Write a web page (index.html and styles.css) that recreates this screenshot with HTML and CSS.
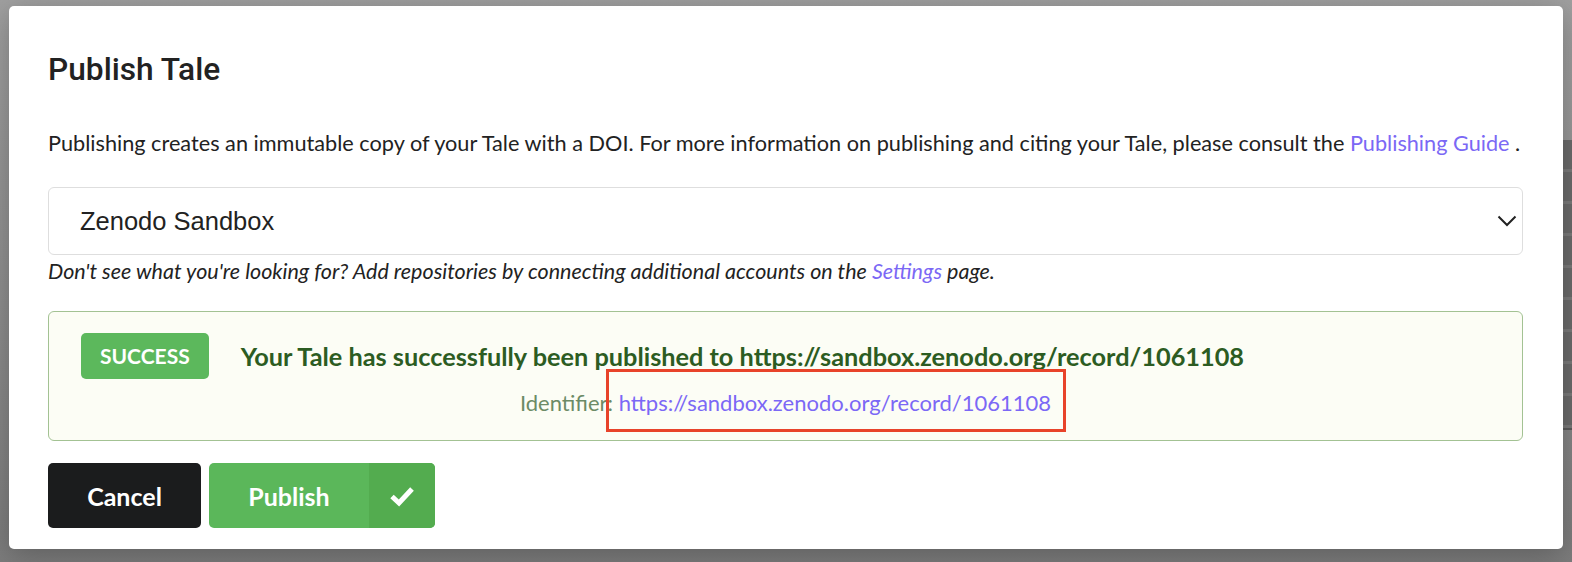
FILE: index.html
```html
<!DOCTYPE html>
<html>
<head>
<meta charset="utf-8">
<link rel="stylesheet" href="styles.css">
</head>
<body>
<div class="backdrop-table">
  <div class="row"></div><div class="row"></div><div class="row"></div><div class="row"></div><div class="row"></div><div class="row"></div><div class="row"></div><div class="row"></div><div class="row"></div>
</div>
<div class="modal">
  <h1 class="title">Publish Tale</h1>
  <p class="intro">Publishing creates an immutable copy of your Tale with a DOI. For more information on publishing and citing your Tale, please consult the <a class="link" href="#">Publishing Guide</a> .</p>
  <div class="select">
    <span class="select-text">Zenodo Sandbox</span>
    <svg class="chevron" width="20" height="12" viewBox="0 0 20 12"><path d="M1.5 1.5 L10 10 L18.5 1.5" fill="none" stroke="#222" stroke-width="2"/></svg>
  </div>
  <p class="hint">Don't see what you're looking for? Add repositories by connecting additional accounts on the <a class="link" href="#">Settings</a> page.</p>
  <div class="message">
    <div class="msg-row">
      <span class="label">SUCCESS</span>
      <span class="msg-header">Your Tale has successfully been published to https://sandbox.zenodo.org/record/1061108</span>
    </div>
    <div class="ident">Identifier: <a class="link" href="#">https://sandbox.zenodo.org/record/1061108</a></div>
    <div class="highlight"></div>
  </div>
  <div class="actions">
    <button class="btn cancel">Cancel</button>
    <button class="btn publish"><span class="pub-text">Publish</span><span class="pub-icon"><svg width="26" height="22" viewBox="0 0 26 22"><path d="M3 11.5 L10 18 L23 4" fill="none" stroke="#fff" stroke-width="5" stroke-linejoin="miter"/></svg></span></button>
  </div>
</div>
</body>
</html>
```

FILE: styles.css
```css
html, body {
  margin: 0;
  padding: 0;
}
body {
  width: 1572px;
  height: 562px;
  overflow: hidden;
  background: linear-gradient(180deg, #a0a0a0 0%, #8c8c8c 60%, #7c7c7c 100%);
  font-family: Lato, "Liberation Sans", sans-serif;
  position: relative;
}
.backdrop-table {
  position: absolute;
  left: 1540px;
  top: 140px;
  width: 40px;
  height: 288px;
  background: #6b6b6b;
  display: flex;
  flex-direction: column;
  border-bottom: 2px solid #5a5a5a;
}
.backdrop-table .row {
  flex: 1;
  border-bottom: 3px solid #7a7a7a;
}
.modal {
  position: relative;
  margin: 6px 0 0 9px;
  width: 1554px;
  height: 543px;
  box-sizing: border-box;
  background: #fff;
  border-radius: 5px;
  padding: 46px 40px 0 39px;
  box-shadow: 0 6px 30px rgba(0,0,0,0.25);
}
.title {
  margin: 0;
  font-family: Roboto, "Liberation Sans", sans-serif;
  font-weight: 500;
  font-size: 31.7px;
  line-height: 36px;
  color: #222;
}
.intro {
  margin: 40px 0 0;
  font-size: 21.7px;
  line-height: 30px;
  color: #222;
  white-space: nowrap;
}
.link {
  color: #7b68f5;
  text-decoration: none;
}
.select {
  margin-top: 29px;
  height: 68px;
  box-sizing: border-box;
  border: 1px solid #dedede;
  border-radius: 6px;
  display: flex;
  align-items: center;
  justify-content: space-between;
  padding: 0 5px 0 31px;
}
.select-text {
  font-family: "Liberation Sans", Arial, sans-serif;
  font-size: 25.5px;
  color: #222;
}
.hint {
  margin: 2px 0 0;
  font-style: italic;
  font-size: 21.5px;
  line-height: 28px;
  color: #222;
  white-space: nowrap;
}
.message {
  position: relative;
  margin-top: 26px;
  height: 130px;
  box-sizing: border-box;
  background: #fcfdf5;
  border: 1px solid #a3c293;
  border-radius: 6px;
  padding: 21px 20px 0 32px;
}
.msg-row {
  display: flex;
  align-items: center;
  gap: 32px;
}
.label {
  background: #5cb85c;
  color: #fff;
  font-weight: 700;
  font-size: 21px;
  height: 46px;
  line-height: 46px;
  padding: 0 19px;
  border-radius: 5px;
  white-space: nowrap;
}
.msg-header {
  color: #2c5c22;
  font-weight: 700;
  font-size: 25.3px;
  white-space: nowrap;
}
.ident {
  text-align: center;
  margin: 10px 0 0 -12px;
  font-size: 22px;
  color: #6c8b66;
  line-height: 28px;
}
.highlight {
  position: absolute;
  left: 557px;
  top: 57px;
  width: 460px;
  height: 63px;
  box-sizing: border-box;
  border: 3px solid #e8432a;
}
.actions {
  margin-top: 22px;
  display: flex;
  gap: 8px;
}
.btn {
  border: none;
  height: 65px;
  border-radius: 5px;
  font-family: Lato, "Liberation Sans", sans-serif;
  font-weight: 700;
  font-size: 25px;
  color: #fff;
  padding: 0;
  cursor: pointer;
}
.cancel {
  width: 153px;
  background: #1b1c1d;
}
.publish {
  width: 226px;
  background: #5bb75a;
  display: flex;
  align-items: stretch;
  overflow: hidden;
}
.pub-text {
  width: 160px;
  display: flex;
  align-items: center;
  justify-content: center;
}
.pub-icon {
  flex: 1;
  background: #53ac4f;
  display: flex;
  align-items: center;
  justify-content: center;
}
```
